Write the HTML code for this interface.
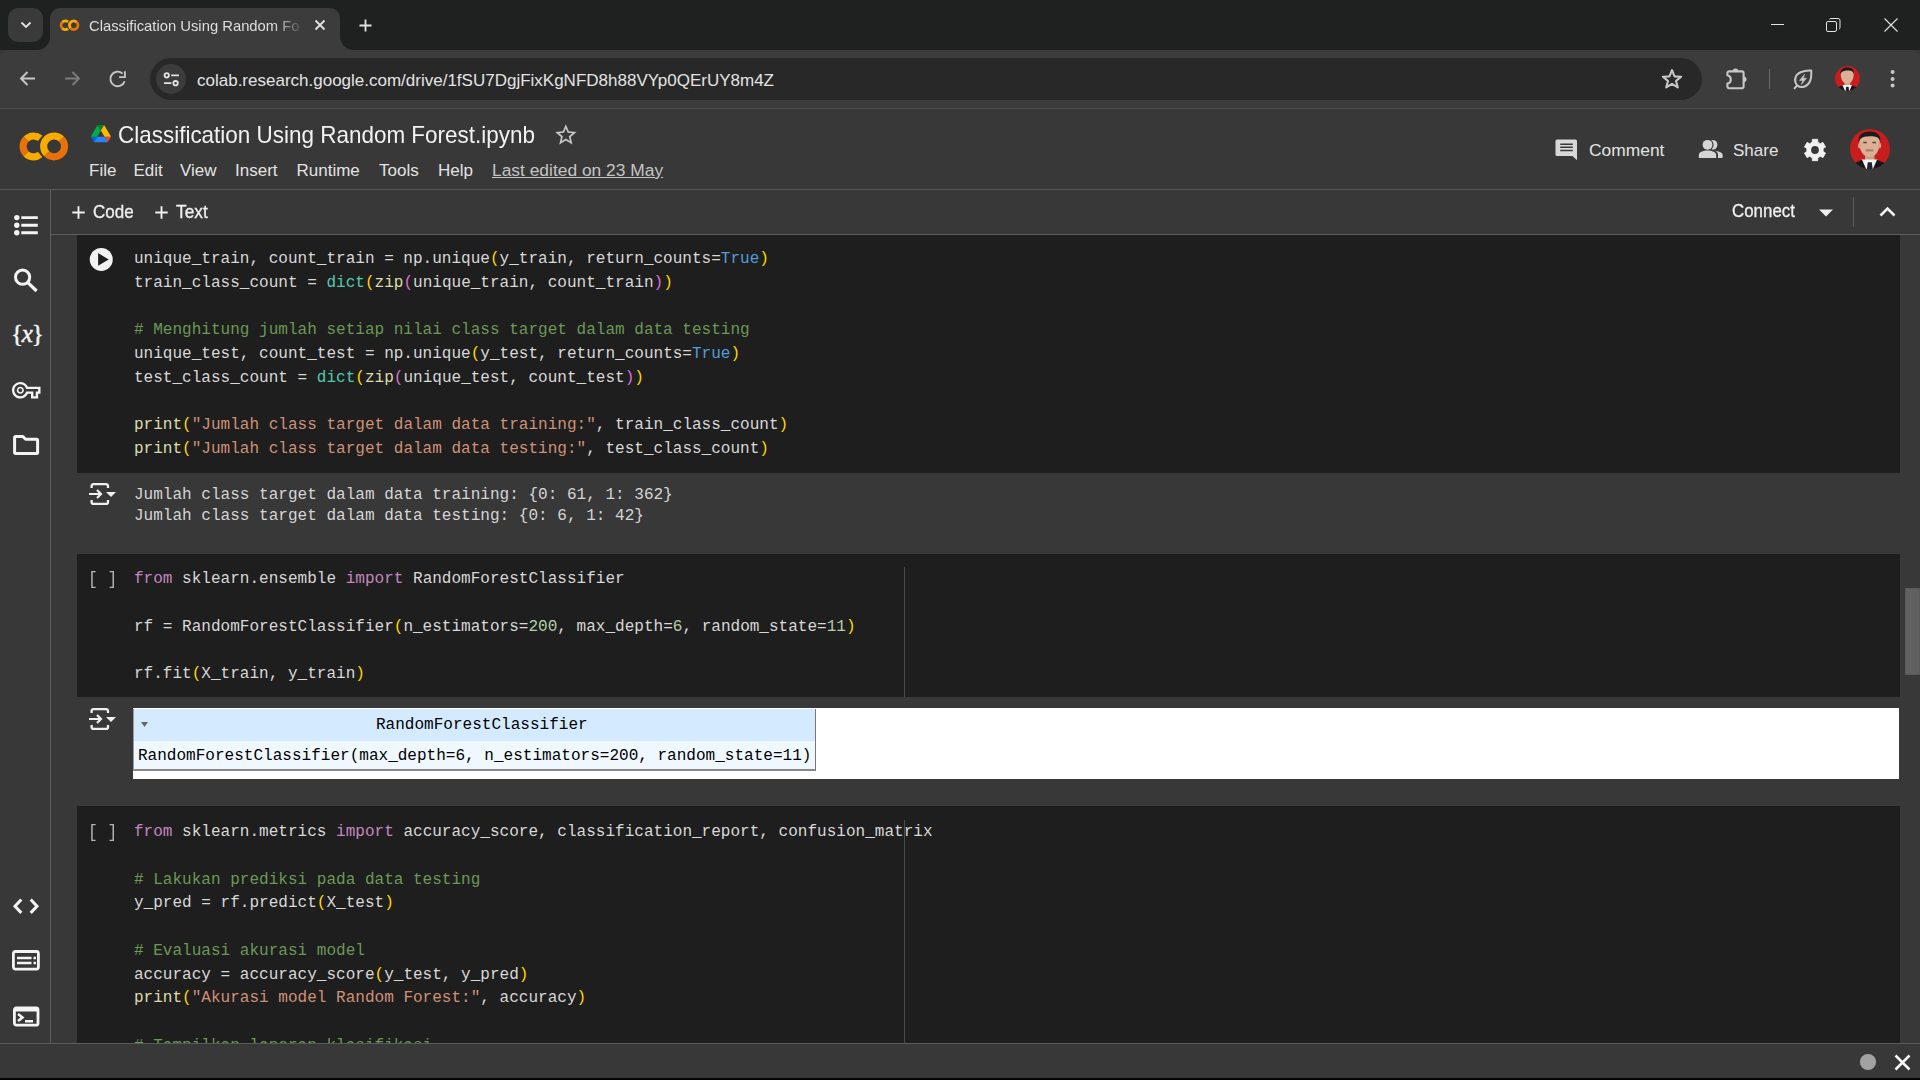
<!DOCTYPE html>
<html><head><meta charset="utf-8">
<style>
*{box-sizing:border-box;margin:0;padding:0}
html,body{width:1920px;height:1080px;overflow:hidden;background:#383838;font-family:"Liberation Sans",sans-serif}
.abs{position:absolute}
svg{position:absolute;overflow:visible}
#tabstrip{left:0;top:0;width:1920px;height:50px;background:#1f2020}
#toolbar{left:0;top:50px;width:1920px;height:59px;background:#3c3c3c;border-radius:10px 10px 0 0;border-bottom:1px solid #4a4a4a}
#colabhdr{left:0;top:109px;width:1920px;height:81px;background:#383838;border-bottom:1px solid #595959}
#sidebar{left:0;top:190px;width:51px;height:853px;background:#383838;border-right:1px solid #5f5f5f}
#nbtool{left:51px;top:190px;width:1869px;height:45px;background:#383838;border-bottom:1px solid #5e5e5e}
#main{left:51px;top:235px;width:1869px;height:808px;background:#383838;overflow:hidden}
#status{left:0;top:1043px;width:1920px;height:37px;background:#383838;border-top:1px solid #5c5c5c;border-bottom:2px solid #050505}
.mono{font-family:"Liberation Mono",monospace;font-size:16.04px}
.cell{position:absolute;left:26px;width:1823px;background:#1e1e1e}
.code{position:absolute;left:83px;white-space:pre;line-height:23.75px;color:#d8d8d8}
.kw{color:#c586c0}.bi{color:#4ec9b0}.tr{color:#569cd6}.st{color:#ce9178}.cm{color:#6a9955}.nu{color:#b5cea8}.fn{color:#dcdcaa}
.b1{color:#ffd700}.b2{color:#da70d6}.b3{color:#179fff}
.out{position:absolute;left:83px;white-space:pre;line-height:21px;color:#d5d5d5}
.t{position:absolute;white-space:nowrap;line-height:1}
</style></head><body>
<!-- ============ TAB STRIP ============ -->
<div id="tabstrip" class="abs">
  <div class="abs" style="left:8px;top:8px;width:35px;height:34px;border-radius:10px;background:#3a3a3a"></div>
  <svg style="left:20px;top:21px" width="12" height="8" viewBox="0 0 12 8"><path d="M1.5 1.5 L6 6 L10.5 1.5" fill="none" stroke="#e3e3e3" stroke-width="1.8"/></svg>
  <!-- active tab -->
  <div class="abs" style="left:50px;top:8px;width:290px;height:42px;background:#3c3c3c;border-radius:10px 10px 0 0"></div>
  <svg style="left:37px;top:37px" width="13" height="13"><path d="M13 0 A13 13 0 0 1 0 13 H13 Z" fill="#3c3c3c"/></svg>
  <svg style="left:340px;top:36px" width="14" height="14"><path d="M0 0 A14 14 0 0 0 14 14 H0 Z" fill="#3c3c3c"/></svg>
  <!-- favicon -->
  <svg style="left:59px;top:19px" width="22" height="13" viewBox="0 0 54 32">
    <g fill="none" stroke-width="7.1">
      <path d="M22.13 23.52A10.45 10.45 0 0 1 8.03 22.66M8.16 8.01A10.45 10.45 0 0 1 22.13 7.28" stroke="#f9ab00"/>
      <path d="M8.03 22.66A10.45 10.45 0 0 1 8.16 8.01" stroke="#e8710a"/>
      <path d="M34.29 25.69A10.45 10.45 0 0 1 34.29 5.11" stroke="#3c3c3c" stroke-width="9.4"/>
      <path d="M28.71 22.79A10.45 10.45 0 0 1 43.49 8.01" stroke="#f9ab00"/>
      <path d="M43.49 8.01A10.45 10.45 0 0 1 28.71 22.79" stroke="#e8710a"/>
    </g>
  </svg>
  <div class="t" style="left:89px;top:19px;width:211px;overflow:hidden;font-size:14.8px;color:#dedede;-webkit-mask-image:linear-gradient(90deg,#000 0,#000 185px,rgba(0,0,0,0.15) 211px)">Classification Using Random Forest.ipynb</div>
  <svg style="left:314px;top:19px" width="12" height="12" viewBox="0 0 12 12"><path d="M1.5 1.5L10.5 10.5M10.5 1.5L1.5 10.5" stroke="#e3e3e3" stroke-width="1.8"/></svg>
  <svg style="left:358px;top:18px" width="15" height="15" viewBox="0 0 15 15"><path d="M7.5 1.5V13.5M1.5 7.5H13.5" stroke="#e3e3e3" stroke-width="1.8"/></svg>
  <!-- window controls -->
  <svg style="left:1771px;top:24px" width="14" height="2"><path d="M0 0.5H13" stroke="#e3e3e3" stroke-width="1"/></svg>
  <svg style="left:1826px;top:18px" width="15" height="14" viewBox="0 0 15 14"><rect x="0.5" y="3.5" width="10" height="10" rx="1.5" fill="none" stroke="#e3e3e3"/><path d="M3.5 1.5 A1.5 1.5 0 0 1 5 0.5 H12 A2 2 0 0 1 14 2.5 V9.5 A1.5 1.5 0 0 1 13 11" fill="none" stroke="#e3e3e3"/></svg>
  <svg style="left:1884px;top:18px" width="14" height="14" viewBox="0 0 14 14"><path d="M0.5 0.5L13.5 13.5M13.5 0.5L0.5 13.5" stroke="#e3e3e3" stroke-width="1.1"/></svg>
</div>
<!-- ============ TOOLBAR ============ -->
<div id="toolbar" class="abs">
  <svg style="left:19px;top:20px" width="17" height="17" viewBox="0 0 17 17"><path d="M16 8.5H2.5M8.5 2L2 8.5L8.5 15" fill="none" stroke="#c7c7c7" stroke-width="1.9"/></svg>
  <svg style="left:64px;top:20px" width="17" height="17" viewBox="0 0 17 17"><path d="M1 8.5H14.5M8.5 2L15 8.5L8.5 15" fill="none" stroke="#7c7c7c" stroke-width="1.9"/></svg>
  <svg style="left:109px;top:20px" width="18" height="18" viewBox="0 0 18 18"><path d="M15.6 11.2 A7.3 7.3 0 1 1 13.6 3.6" fill="none" stroke="#c7c7c7" stroke-width="1.9"/><path d="M15.9 1.3 V7.1 H10.1" fill="none" stroke="#c7c7c7" stroke-width="1.9"/></svg>
  <!-- omnibox -->
  <div class="abs" style="left:150px;top:8px;width:1552px;height:42px;border-radius:21px;background:#282828"></div>
  <div class="abs" style="left:156px;top:14px;width:30px;height:30px;border-radius:15px;background:#3c3c3c"></div>
  <svg style="left:163px;top:22px" width="18" height="15" viewBox="0 0 18 15"><circle cx="3.7" cy="3.3" r="2.2" fill="none" stroke="#e3e3e3" stroke-width="1.8"/><path d="M8.2 3.3H15.9M1 11.2H8.4" stroke="#e3e3e3" stroke-width="1.8"/><circle cx="12.6" cy="11.2" r="2.2" fill="none" stroke="#e3e3e3" stroke-width="1.8"/></svg>
  <div class="t" style="left:197px;top:22px;font-size:17px;color:#e3e3e3">colab.research.google.com/drive/1fSU7DgjFixKgNFD8h88VYp0QErUY8m4Z</div>
  <svg style="left:1661px;top:18px" width="22" height="22" viewBox="0 0 24 24"><path d="M12 2.3 L14.75 9.1 L22 9.5 L16.4 14.1 L18.3 21.2 L12 17.2 L5.7 21.2 L7.6 14.1 L2 9.5 L9.25 9.1 Z" fill="none" stroke="#c7c7c7" stroke-width="2.3" stroke-linejoin="round"/></svg>
  <svg style="left:1725px;top:17px" width="24" height="23" viewBox="0 0 24 23"><path d="M4 4.4 H17 A1.6 1.6 0 0 1 18.6 6 V19.6 A1.6 1.6 0 0 1 17 21.2 H4 A1.6 1.6 0 0 1 2.4 19.6 V16.6 A4.3 4.3 0 0 0 2.4 8.2 V6 A1.6 1.6 0 0 1 4 4.4Z" fill="none" stroke="#c7c7c7" stroke-width="2.1" stroke-linejoin="round"/><path d="M7.6 4.4 A2.9 2.9 0 0 1 13.4 4.4Z" fill="#c7c7c7"/><path d="M18.6 9.4 A2.9 2.9 0 0 1 18.6 15.2Z" fill="#c7c7c7"/></svg>
  <div class="abs" style="left:1769px;top:19px;width:1px;height:20px;background:#6a6a6a"></div>
  <svg style="left:1792px;top:18px" width="22" height="22" viewBox="0 0 22 22"><path d="M2.6 20.2 L5.2 17.6 C1.6 13.6 2.6 6.6 8.6 4.2 C12 2.8 16.5 2.4 19.2 2.6 C19.5 6 19.4 10.5 17.6 14 C15 19 9.2 20.5 5.4 17.6" fill="none" stroke="#c7c7c7" stroke-width="2" stroke-linecap="round" stroke-linejoin="round"/><path d="M12.6 6.2 L7.6 12.4 H10.9 L9.4 16.6 L14.4 10.2 H11.1 Z" fill="#c7c7c7" stroke="#c7c7c7" stroke-width="0.6" stroke-linejoin="round"/></svg>
  <!-- avatar small -->
  <svg style="left:1835px;top:16px" width="25" height="25" viewBox="0 0 40 40">
    <defs><clipPath id="avc2"><circle cx="20" cy="20" r="20"/></clipPath></defs>
    <g clip-path="url(#avc2)">
      <rect width="40" height="40" fill="#c91d1d"/>
      <g filter="url(#avb)">
        <rect x="15" y="24" width="9.5" height="8" fill="#cf9f82"/>
        <path d="M9.3 13 C9.3 7 13.5 4.8 19.5 4.8 C25.5 4.8 29.8 7 29.8 13 C29.8 20 27 27.5 19.5 28 C12 27.5 9.3 20 9.3 13Z" fill="#dcb095"/>
        <path d="M8.6 13.5 C8 6 12.5 2.4 19.5 2.4 C26.5 2.4 31 5.5 30.4 13 C29.6 9.6 27.5 7.6 24 7.4 C21 7.2 17 7.4 14.5 7.8 C11.2 8.4 9.6 10.5 8.6 13.5Z" fill="#1b1b1b"/>
        <path d="M11.5 30.5 H27.5 L25.5 41 H13.5Z" fill="#f4f4f6"/>
        <path d="M17.8 33.2 H21.8 L22.8 41 H16.8Z" fill="#1c2233"/>
        <path d="M-2 41 L3 35 L12 30.8 L16.5 41Z" fill="#14151b"/>
        <path d="M42 41 L37 35 L27 30.8 L22.5 41Z" fill="#14151b"/>
      </g>
    </g>
  </svg>
  <svg style="left:1890px;top:19px" width="6" height="20"><circle cx="2.6" cy="3" r="2" fill="#c7c7c7"/><circle cx="2.6" cy="10" r="2" fill="#c7c7c7"/><circle cx="2.6" cy="16.6" r="2" fill="#c7c7c7"/></svg>
</div>
<!-- ============ COLAB HEADER ============ -->
<div id="colabhdr" class="abs">
  <svg style="left:18px;top:22px" width="54" height="32" viewBox="0 0 54 32">
    <g fill="none" stroke-width="7.1">
      <path d="M22.13 23.52A10.45 10.45 0 0 1 8.03 22.66M8.16 8.01A10.45 10.45 0 0 1 22.13 7.28" stroke="#f9ab00"/>
      <path d="M8.03 22.66A10.45 10.45 0 0 1 8.16 8.01" stroke="#e8710a"/>
      <path d="M34.29 25.69A10.45 10.45 0 0 1 34.29 5.11" stroke="#383838" stroke-width="9.4"/>
      <path d="M28.71 22.79A10.45 10.45 0 0 1 43.49 8.01" stroke="#f9ab00"/>
      <path d="M43.49 8.01A10.45 10.45 0 0 1 28.71 22.79" stroke="#e8710a"/>
    </g>
  </svg>
  <!-- drive -->
  <svg style="left:90.8px;top:15.7px" width="19.8" height="17.3" viewBox="0 0 87.3 78" preserveAspectRatio="none">
    <path d="m6.6 66.85 3.85 6.65c.8 1.4 1.95 2.5 3.3 3.3l13.75-23.8h-27.5c0 1.55.4 3.1 1.2 4.5z" fill="#0066da"/>
    <path d="m43.65 25-13.750-23.8c-1.35.8-2.5 1.9-3.3 3.3l-25.4 44a9.06 9.06 0 0 0 -1.2 4.5h27.5z" fill="#00ac47"/>
    <path d="m73.55 76.8c1.35-.8 2.5-1.9 3.3-3.3l1.6-2.75 7.65-13.25c.8-1.4 1.2-2.95 1.2-4.5h-27.502l5.852 11.5z" fill="#ea4335"/>
    <path d="m43.65 25 13.75-23.8c-1.35-.8-2.9-1.2-4.5-1.2h-18.5c-1.6 0-3.15.45-4.5 1.2z" fill="#00832d"/>
    <path d="m59.8 53h-32.3l-13.75 23.8c1.35.8 2.9 1.2 4.5 1.2h50.8c1.6 0 3.15-.45 4.5-1.2z" fill="#2684fc"/>
    <path d="m73.4 26.5-12.7-22c-.8-1.4-1.95-2.5-3.3-3.3l-13.75 23.8 16.15 28h27.45c0-1.55-.4-3.1-1.2-4.5z" fill="#ffba00"/>
  </svg>
  <div class="t" style="left:118px;top:15px;font-size:23.6px;color:#f2f2f2;transform:scaleX(0.952);transform-origin:0 0">Classification Using Random Forest.ipynb</div>
  <svg style="left:553px;top:12.9px" width="25.7" height="25.7" viewBox="0 0 24 24"><path fill="#c6c6c6" d="M22 9.24l-7.19-.62L12 2 9.19 8.63 2 9.24l5.46 4.73L5.82 21 12 17.27 18.18 21l-1.63-7.03L22 9.24zM12 15.4l-3.76 2.27 1-4.28-3.32-2.88 4.38-.38L12 6.1l1.71 4.04 4.38.38-3.32 2.88 1 4.28L12 15.4z"/></svg>
  <div class="t" style="left:89px;top:53px;font-size:17px;color:#e3e3e3">File</div>
  <div class="t" style="left:133.5px;top:53px;font-size:17px;color:#e3e3e3">Edit</div>
  <div class="t" style="left:180px;top:53px;font-size:17px;color:#e3e3e3">View</div>
  <div class="t" style="left:235px;top:53px;font-size:17px;color:#e3e3e3">Insert</div>
  <div class="t" style="left:296.5px;top:53px;font-size:17px;color:#e3e3e3">Runtime</div>
  <div class="t" style="left:379px;top:53px;font-size:17px;color:#e3e3e3">Tools</div>
  <div class="t" style="left:438px;top:53px;font-size:17px;color:#e3e3e3">Help</div>
  <div class="t" style="left:492px;top:53px;font-size:17.4px;color:#c4c4c4;text-decoration:underline">Last edited on 23 May</div>
  <!-- right -->
  <svg style="left:1555px;top:30px" width="23" height="22" viewBox="0 0 23 22"><path d="M2 0.5 H20.5 A1.5 1.5 0 0 1 22 2 V21.3 L17.5 17 H2 A1.5 1.5 0 0 1 0.5 15.5 V2 A1.5 1.5 0 0 1 2 0.5Z" fill="#d8d8d8"/><path d="M5.2 5.2H17.8M5.2 8.3H17.8M5.2 11.6H17.8" stroke="#383838" stroke-width="1.5"/></svg>
  <div class="t" style="left:1589px;top:33px;font-size:17.4px;color:#e3e3e3">Comment</div>
  <svg style="left:1698px;top:30px" width="26" height="20" viewBox="0 0 26 20">
    <circle cx="14.5" cy="5.8" r="4.9" fill="#d5d5d5"/><path d="M13 11.5 C19 11.5 24.6 13 24.6 16 V18.9 H13Z" fill="#d5d5d5"/>
    <circle cx="9.5" cy="5.8" r="6.1" fill="#383838"/><path d="M-1 20 V15.5 C-1 11.8 4 10.2 9.5 10.2 C15 10.2 20 11.8 20 15.5 V20Z" fill="#383838"/>
    <circle cx="9.5" cy="5.8" r="4.9" fill="#d5d5d5"/><path d="M0.8 18.9 V16 C0.8 13 5 11.5 9.5 11.5 C14 11.5 18.2 13 18.2 16 V18.9Z" fill="#d5d5d5"/>
  </svg>
  <div class="t" style="left:1733px;top:33px;font-size:17px;color:#e3e3e3">Share</div>
  <svg style="left:1801.5px;top:28.5px" width="26" height="24" viewBox="0 0 24 24"><path d="M7.90 4.90 L9.20 4.29 L9.34 1.33 L14.66 1.33 L14.80 4.29 L16.10 4.90 L17.27 5.72 L19.91 4.36 L22.57 8.97 L20.08 10.58 L20.20 12.00 L20.08 13.42 L22.57 15.03 L19.91 19.64 L17.27 18.28 L16.10 19.10 L14.80 19.71 L14.66 22.67 L9.34 22.67 L9.20 19.71 L7.90 19.10 L6.73 18.28 L4.09 19.64 L1.43 15.03 L3.92 13.42 L3.80 12.00 L3.92 10.58 L1.43 8.97 L4.09 4.36 L6.73 5.72Z" fill="#f2f2f2" stroke="#f2f2f2" stroke-width="0.8" stroke-linejoin="round"/><circle cx="12" cy="12" r="3.9" fill="#383838"/></svg>
  <svg style="left:1850px;top:20px" width="40" height="40" viewBox="0 0 40 40">
    <defs><clipPath id="avc"><circle cx="20" cy="20" r="20"/></clipPath><filter id="avb" x="-10%" y="-10%" width="120%" height="120%"><feGaussianBlur stdDeviation="0.45"/></filter></defs>
    <g clip-path="url(#avc)">
      <rect width="40" height="40" fill="#c91d1d"/>
      <g filter="url(#avb)">
        <rect x="15" y="24" width="9.5" height="8" fill="#cf9f82"/>
        <path d="M9.3 13 C9.3 7 13.5 4.8 19.5 4.8 C25.5 4.8 29.8 7 29.8 13 C29.8 20 27 27.5 19.5 28 C12 27.5 9.3 20 9.3 13Z" fill="#dcb095"/>
        <ellipse cx="9.6" cy="16.5" rx="1.6" ry="2.8" fill="#d4a486"/>
        <ellipse cx="29.6" cy="16.5" rx="1.6" ry="2.8" fill="#d4a486"/>
        <path d="M8.6 13.5 C8 6 12.5 2.4 19.5 2.4 C26.5 2.4 31 5.5 30.4 13 C29.6 9.6 27.5 7.6 24 7.4 C21 7.2 17 7.4 14.5 7.8 C11.2 8.4 9.6 10.5 8.6 13.5Z" fill="#1b1b1b"/>
        <rect x="13.2" y="12.8" width="3.6" height="1.5" fill="#5a4236"/>
        <rect x="22.4" y="12.8" width="3.6" height="1.5" fill="#5a4236"/>
        <rect x="15.5" y="20.2" width="8" height="2.2" rx="1" fill="#a9806f"/>
        <path d="M11.5 30.5 H27.5 L25.5 41 H13.5Z" fill="#f4f4f6"/>
        <path d="M17.8 33.2 H21.8 L22.8 41 H16.8Z" fill="#1c2233"/>
        <path d="M-2 41 L3 35 L12 30.8 L16.5 41Z" fill="#14151b"/>
        <path d="M42 41 L37 35 L27 30.8 L22.5 41Z" fill="#14151b"/>
      </g>
    </g>
  </svg>
</div>
<!-- ============ SIDEBAR ============ -->
<div id="sidebar" class="abs">
  <svg style="left:14px;top:25px" width="26" height="22" viewBox="0 0 26 22"><circle cx="2.8" cy="2.6" r="2.7" fill="#f4f4f4"/><circle cx="2.8" cy="10.2" r="2.7" fill="#f4f4f4"/><circle cx="2.8" cy="17.8" r="2.7" fill="#f4f4f4"/><path d="M7.3 2.6H23.8M7.3 10.2H23.8M7.3 17.8H23.8" stroke="#f4f4f4" stroke-width="2.9"/></svg>
  <svg style="left:13px;top:78px" width="26" height="26" viewBox="0 0 26 26"><circle cx="9.6" cy="9.2" r="7.1" fill="none" stroke="#f4f4f4" stroke-width="3"/><path d="M14.6 14.4L23.6 23" stroke="#f4f4f4" stroke-width="3.3"/></svg>
  <div class="t" style="left:11px;top:131px;font-family:'Liberation Serif',serif;font-size:25px;color:#f4f4f4;letter-spacing:-1.2px;-webkit-text-stroke:0.5px #f4f4f4">{<i>x</i>}</div>
  <svg style="left:11.5px;top:186px" width="28.5" height="28.5" viewBox="0 0 24 24"><path fill="#f4f4f4" d="M22 19h-6v-4h-2.68c-1.14 2.42-3.6 4-6.32 4-3.86 0-7-3.140-7-7s3.14-7 7-7c2.72 0 5.17 1.58 6.32 4H24v6h-2v4zm-4-2h2v-4h2v-2H11.94l-.23-.67C11.01 8.34 9.110 7 7 7c-2.76 0-5 2.24-5 5s2.24 5 5 5c2.11 0 4.01-1.34 4.71-3.33l.23-.67H18v4zM7 15c-1.65 0-3-1.35-3-3s1.35-3 3-3 3 1.35 3 3-1.35 3-3 3zm0-4.6c-.9 0-1.6.7-1.6 1.6s.7 1.6 1.6 1.6 1.6-.7 1.6-1.6-.7-1.6-1.6-1.6z"/></svg>
  <svg style="left:12.5px;top:244.5px" width="27" height="21" viewBox="0 0 27 21"><path d="M1.6 2.6 A1 1 0 0 1 2.6 1.6 H10 L12.6 4.2 H23.6 A1 1 0 0 1 24.6 5.2 V17.6 A1 1 0 0 1 23.6 18.6 H2.6 A1 1 0 0 1 1.6 17.6Z" fill="none" stroke="#f4f4f4" stroke-width="3" stroke-linejoin="round"/></svg>
  <svg style="left:13px;top:708px" width="26" height="17" viewBox="0 0 26 17"><path d="M8.3 1.5L2 8.2L8.3 14.9M17.7 1.5L24 8.2L17.7 14.9" fill="none" stroke="#f4f4f4" stroke-width="3"/></svg>
  <svg style="left:12px;top:759.5px" width="28" height="21" viewBox="0 0 28 21"><rect x="1.4" y="1.5" width="25" height="17.6" rx="2" fill="none" stroke="#f4f4f4" stroke-width="2.8"/><path d="M5 8H19.5M5 13H19.5M21.5 8H24M21.5 13H24" stroke="#f4f4f4" stroke-width="2.6"/></svg>
  <svg style="left:12.5px;top:815.5px" width="26.5" height="21" viewBox="0 0 26.5 21"><rect x="1.4" y="1.8" width="23.6" height="17.4" rx="2" fill="none" stroke="#f4f4f4" stroke-width="2.8"/><path d="M1.4 3.5H25" stroke="#f4f4f4" stroke-width="4"/><path d="M5 8L9.5 11.5L5 15M12 15.3H20" fill="none" stroke="#f4f4f4" stroke-width="2.5"/></svg>
</div>
<!-- ============ NB TOOLBAR ============ -->
<div id="nbtool" class="abs">
  <svg style="left:20.5px;top:15.5px" width="13" height="13" viewBox="0 0 13 13"><path d="M6.5 0.3V12.7M0.3 6.5H12.7" stroke="#f0f0f0" stroke-width="1.9"/></svg>
  <div class="t" style="left:42px;top:13px;font-size:18.4px;color:#f0f0f0;transform:scaleX(0.925);transform-origin:0 0;-webkit-text-stroke:0.3px #f0f0f0">Code</div>
  <svg style="left:104px;top:15.5px" width="13" height="13" viewBox="0 0 13 13"><path d="M6.5 0.3V12.7M0.3 6.5H12.7" stroke="#f0f0f0" stroke-width="1.9"/></svg>
  <div class="t" style="left:125px;top:13px;font-size:18.4px;color:#f0f0f0;transform:scaleX(0.94);transform-origin:0 0;-webkit-text-stroke:0.3px #f0f0f0">Text</div>
  <div class="t" style="left:1681px;top:12.5px;font-size:17.6px;color:#f0f0f0;transform:scaleX(0.96);transform-origin:0 0;-webkit-text-stroke:0.3px #f0f0f0">Connect</div>
  <svg style="left:1768px;top:19px" width="14" height="8" viewBox="0 0 14 8"><path d="M0 0.5H14L7 7.5Z" fill="#f0f0f0"/></svg>
  <div class="abs" style="left:1802px;top:7px;width:1px;height:30px;background:#5c5c5c"></div>
  <svg style="left:1828px;top:16px" width="17" height="11" viewBox="0 0 17 11"><path d="M1.5 9.5L8.5 2.5L15.5 9.5" fill="none" stroke="#f0f0f0" stroke-width="2.6"/></svg>
</div>
<!-- ============ MAIN ============ -->
<div id="main" class="abs">
  <div class="cell" style="top:0;height:238px"></div>
  <svg style="left:39px;top:12px" width="24" height="25" viewBox="0 0 24 25"><circle cx="11.25" cy="12.4" r="11.5" fill="#f2f2f2"/><path d="M8.1 6.1V18.8L18.7 12.45Z" fill="#1e1e1e"/></svg>
  <div class="code mono" style="top:13px">unique_train, count_train = np.unique<span class="b1">(</span>y_train, return_counts=<span class="tr">True</span><span class="b1">)</span>
train_class_count = <span class="bi">dict</span><span class="b1">(</span><span class="fn">zip</span><span class="b2">(</span>unique_train, count_train<span class="b2">)</span><span class="b1">)</span>

<span class="cm"># Menghitung jumlah setiap nilai class target dalam data testing</span>
unique_test, count_test = np.unique<span class="b1">(</span>y_test, return_counts=<span class="tr">True</span><span class="b1">)</span>
test_class_count = <span class="bi">dict</span><span class="b1">(</span><span class="fn">zip</span><span class="b2">(</span>unique_test, count_test<span class="b2">)</span><span class="b1">)</span>

<span class="fn">print</span><span class="b1">(</span><span class="st">"Jumlah class target dalam data training:"</span>, train_class_count<span class="b1">)</span>
<span class="fn">print</span><span class="b1">(</span><span class="st">"Jumlah class target dalam data testing:"</span>, test_class_count<span class="b1">)</span></div>
  <svg style="left:38px;top:248px" width="28" height="22" viewBox="0 0 28 22"><path d="M2.6 5V3.1A2 2 0 0 1 4.6 1.1H17A2 2 0 0 1 19 3.1V5M2.6 17V18.9A2 2 0 0 0 4.6 20.9H17A2 2 0 0 0 19 18.9V17" fill="none" stroke="#f0f0f0" stroke-width="2.3"/><path d="M0 11H12M8 7L12 11L8 15" fill="none" stroke="#f0f0f0" stroke-width="2.2"/><path d="M17 9H27L22 14Z" fill="#f0f0f0"/></svg>
  <div class="out mono" style="top:250px">Jumlah class target dalam data training: {0: 61, 1: 362}
Jumlah class target dalam data testing: {0: 6, 1: 42}</div>

  <div class="cell" style="top:319px;height:143px"></div>
  <div class="t mono" style="left:37px;top:335px;color:#b4b4b4;font-size:18px;transform:scaleX(0.9);transform-origin:0 0">[ ]</div>
  <div class="abs" style="left:853px;top:332px;width:1px;height:130px;background:#4a4a4a"></div>
  <div class="code mono" style="top:333px"><span class="kw">from</span> sklearn.ensemble <span class="kw">import</span> RandomForestClassifier

rf = RandomForestClassifier<span class="b1">(</span>n_estimators=<span class="nu">200</span>, max_depth=<span class="nu">6</span>, random_state=<span class="nu">11</span><span class="b1">)</span>

rf.fit<span class="b1">(</span>X_train, y_train<span class="b1">)</span></div>

  <svg style="left:38px;top:473px" width="28" height="22" viewBox="0 0 28 22"><path d="M2.6 5V3.1A2 2 0 0 1 4.6 1.1H17A2 2 0 0 1 19 3.1V5M2.6 17V18.9A2 2 0 0 0 4.6 20.9H17A2 2 0 0 0 19 18.9V17" fill="none" stroke="#f0f0f0" stroke-width="2.3"/><path d="M0 11H12M8 7L12 11L8 15" fill="none" stroke="#f0f0f0" stroke-width="2.2"/><path d="M17 9H27L22 14Z" fill="#f0f0f0"/></svg>
  <div class="abs" style="left:82px;top:473px;width:1766px;height:71px;background:#fff"></div>
  <div class="abs" style="left:82px;top:474px;width:683px;height:62px;border:1px solid #9a9a9a;border-top:1px dotted #888;border-right:1px solid #777;border-bottom:2px solid #888;background:#f0f8ff"></div>
  <div class="abs" style="left:83px;top:474px;width:681px;height:32px;background:#d4ebff"></div>
  <svg style="left:90px;top:487px" width="8" height="6"><path d="M0 0H7L3.5 5Z" fill="#666"/></svg>
  <div class="t mono" style="left:325px;top:482px;color:#000">RandomForestClassifier</div>
  <div class="t mono" style="left:87px;top:513px;color:#000">RandomForestClassifier(max_depth=6, n_estimators=200, random_state=11)</div>

  <div class="cell" style="top:571px;height:300px"></div>
  <div class="t mono" style="left:37px;top:588px;color:#b4b4b4;font-size:18px;transform:scaleX(0.9);transform-origin:0 0">[ ]</div>
  <div class="abs" style="left:853px;top:585px;width:1px;height:230px;background:#4a4a4a"></div>
  <div class="code mono" style="top:586px"><span class="kw">from</span> sklearn.metrics <span class="kw">import</span> accuracy_score, classification_report, confusion_matrix

<span class="cm"># Lakukan prediksi pada data testing</span>
y_pred = rf.predict<span class="b1">(</span>X_test<span class="b1">)</span>

<span class="cm"># Evaluasi akurasi model</span>
accuracy = accuracy_score<span class="b1">(</span>y_test, y_pred<span class="b1">)</span>
<span class="fn">print</span><span class="b1">(</span><span class="st">"Akurasi model Random Forest:"</span>, accuracy<span class="b1">)</span>

<span class="cm"># Tampilkan laporan klasifikasi</span></div>
  <!-- scrollbar -->
  <div class="abs" style="left:1854px;top:353px;width:15px;height:87px;background:#606060;border:1px solid #5a5a5a"></div>
</div>
<!-- ============ STATUS ============ -->
<div id="status" class="abs">
  <div class="abs" style="left:1860px;top:10px;width:15.5px;height:15.5px;border-radius:50%;background:#a2a2a2"></div>
  <svg style="left:1894px;top:10px" width="17" height="17" viewBox="0 0 17 17"><path d="M1.5 1.5L15.5 15.5M15.5 1.5L1.5 15.5" stroke="#f8f8f8" stroke-width="2.5"/></svg>
</div>
</body></html>
